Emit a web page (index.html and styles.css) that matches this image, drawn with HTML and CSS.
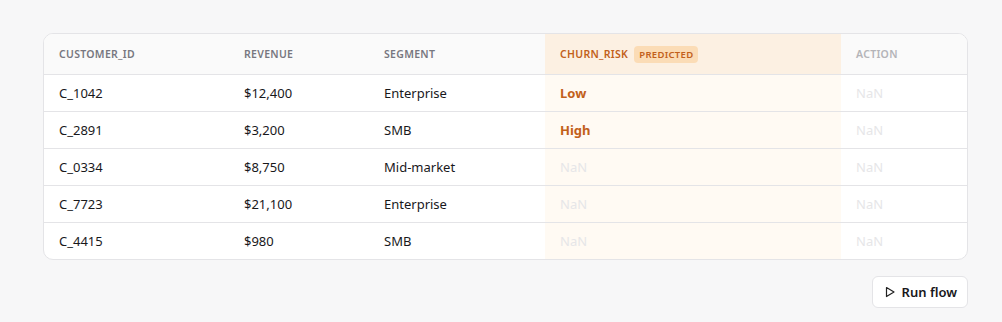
FILE: index.html
```html
<!DOCTYPE html>
<html lang="en">
<head>
  <meta charset="UTF-8" />
  <title>Churn prediction</title>
  <link rel="stylesheet" href="styles.css">
</head>
<body>
  <div class="card">
    <table class="grid">
      <colgroup>
        <col class="c-id"><col class="c-rev"><col class="c-seg"><col class="c-churn"><col class="c-action">
      </colgroup>
      <thead>
        <tr>
          <th>CUSTOMER_ID</th>
          <th>REVENUE</th>
          <th>SEGMENT</th>
          <th class="predicted">CHURN_RISK <span class="badge">PREDICTED</span></th>
          <th class="muted-head">ACTION</th>
        </tr>
      </thead>
      <tbody>
        <tr><td>C_1042</td><td>$12,400</td><td>Enterprise</td><td class="predicted risk">Low</td><td class="nan">NaN</td></tr>
        <tr><td>C_2891</td><td>$3,200</td><td>SMB</td><td class="predicted risk">High</td><td class="nan">NaN</td></tr>
        <tr><td>C_0334</td><td>$8,750</td><td>Mid-market</td><td class="predicted nan">NaN</td><td class="nan">NaN</td></tr>
        <tr><td>C_7723</td><td>$21,100</td><td>Enterprise</td><td class="predicted nan">NaN</td><td class="nan">NaN</td></tr>
        <tr><td>C_4415</td><td>$980</td><td>SMB</td><td class="predicted nan">NaN</td><td class="nan">NaN</td></tr>
      </tbody>
    </table>
  </div>

  <div class="actions">
    <button class="run">
      <svg width="12" height="12" viewBox="0 0 12 12"><path d="M2.5 1.5 L10 6 L2.5 10.5 Z" fill="none" stroke="#222" stroke-width="1.2" stroke-linejoin="round"/></svg>
      Run flow
    </button>
  </div>
</body>
</html>
```

FILE: styles.css
```css
:root {
  --bg: #f7f7f8;
  --card: #ffffff;
  --border: #e4e4e7;
  --text: #18181b;
  --head: #777780;
  --accent: #c2601a;
}

body {
  margin: 0;
  padding: 33px 34px 0 43px;
  background: var(--bg);
  font-family: 'Noto Sans', sans-serif;
  color: var(--text);
}

.card {
  background: var(--card);
  border: 1px solid var(--border);
  border-radius: 10px;
  overflow: hidden;
}

.grid {
  width: 100%;
  border-collapse: collapse;
  table-layout: fixed;
}

.c-id { width: 185px; }
.c-rev { width: 140px; }
.c-seg { width: 176px; }
.c-churn { width: 296px; }

th {
  height: 40px;
  padding: 0 15px;
  text-align: left;
  font-size: 10.5px;
  font-weight: 600;
  letter-spacing: 0.3px;
  color: var(--head);
  background: #fafafa;
  border-bottom: 1px solid var(--border);
  white-space: nowrap;
}

th.predicted {
  background: #fcf0e2;
  color: var(--accent);
}

th.muted-head {
  color: #b4b4b8;
}

.badge {
  display: inline-block;
  margin-left: 3px;
  padding: 2px 5px;
  border-radius: 4px;
  background: #fbdcb6;
  color: var(--accent);
  font-size: 9.5px;
  font-weight: 600;
  letter-spacing: 0.3px;
  line-height: 13px;
}

td {
  height: 36px;
  padding: 0 15px;
  font-size: 13px;
  border-bottom: 1px solid var(--border);
}

tbody tr:last-child td {
  border-bottom: none;
}

td.predicted {
  background: #fffaf3;
}

.risk {
  color: var(--accent);
  font-weight: 700;
}

.nan {
  color: #e6e6e8;
}

.actions {
  display: flex;
  justify-content: flex-end;
  margin-top: 16px;
}

.run {
  display: flex;
  align-items: center;
  gap: 6px;
  height: 32px;
  padding: 0 10px 0 11px;
  background: #fff;
  border: 1px solid var(--border);
  border-radius: 6px;
  font-family: inherit;
  font-size: 13px;
  font-weight: 600;
  color: var(--text);
  cursor: pointer;
}
```
